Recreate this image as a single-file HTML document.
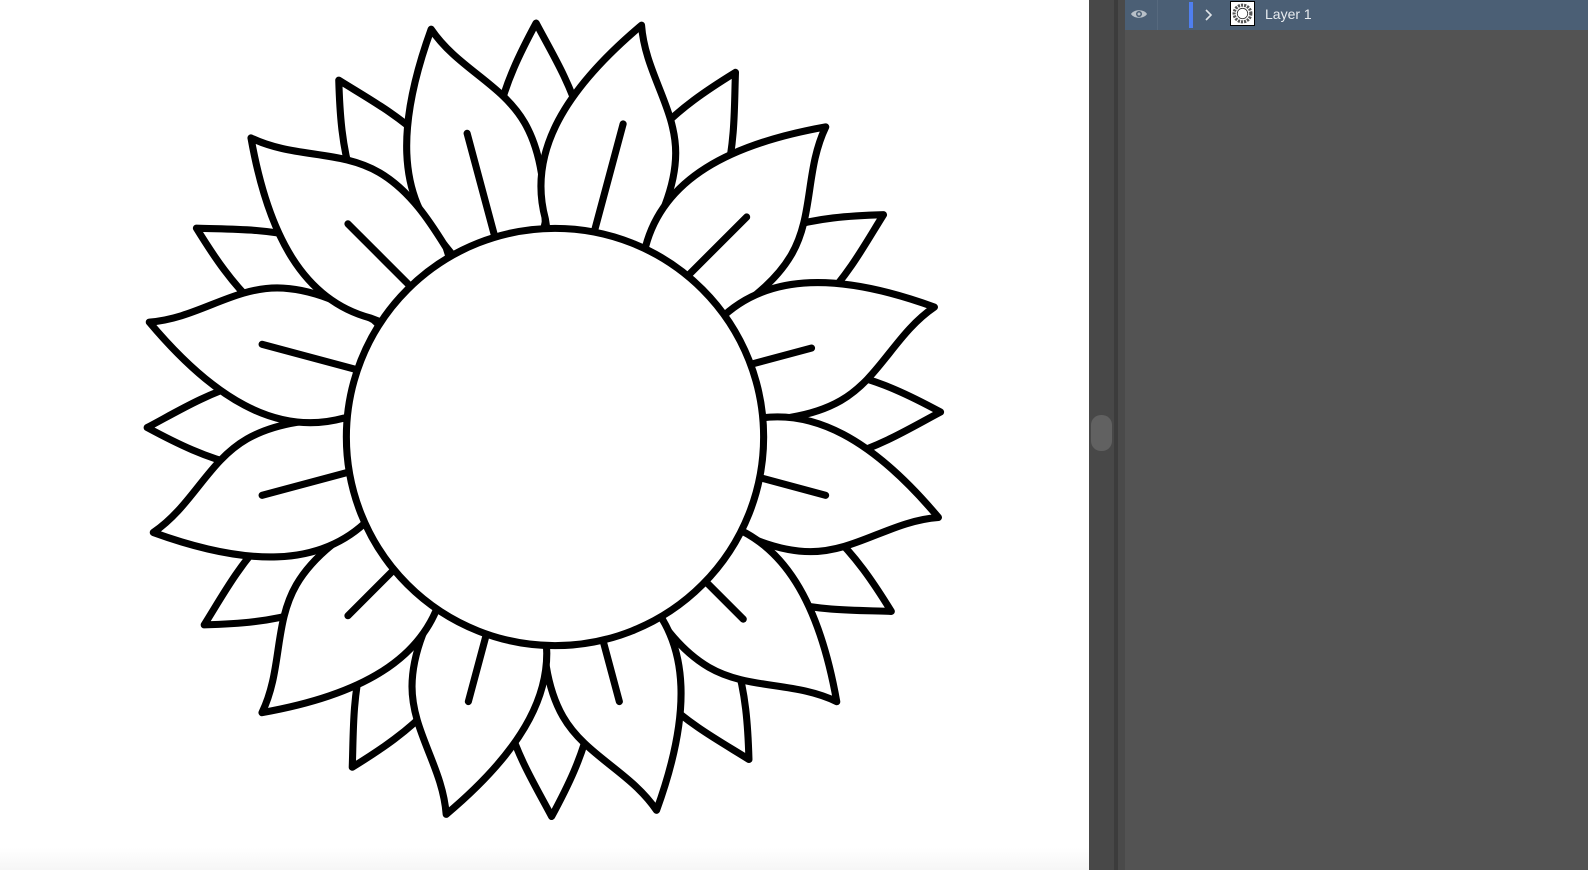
<!DOCTYPE html>
<html><head><style>
html,body{margin:0;padding:0;width:1588px;height:870px;overflow:hidden;background:#fff;font-family:"Liberation Sans",sans-serif}
.canvas{position:absolute;left:0;top:0;width:1089px;height:870px;background:linear-gradient(#fff 848px,#f6f6f6 870px)}
.p1{position:absolute;left:1089px;top:0;width:25px;height:870px;background:#484848}
.div{position:absolute;left:1114px;top:0;width:4px;height:870px;background:#3c3c3c}
.p2{position:absolute;left:1118px;top:0;width:7px;height:870px;background:#4a4a4a}
.p3{position:absolute;left:1125px;top:0;width:463px;height:870px;background:#535353}
.row{position:absolute;left:1125px;top:0;width:463px;height:30px;background:#4b5f75}
.thumb{position:absolute;left:1091px;top:415px;width:21px;height:36px;border-radius:10px;background:#616161}
</style></head><body>
<div class="canvas">
<svg width="1089" height="870" viewBox="0 0 1089 870">
<defs>
<path id="bp" d="M -30,-150 L -45,-200 C -65,-290 -42,-345 -8,-408 C 20,-355 58,-300 45,-200 L 30,-150 Z"/>
<path id="fp" d="M -30,-150 L -52,-200 C -88,-262 -66,-335 -8,-418 C 8,-372 48,-345 60,-300 C 70,-262 60,-222 54,-196 L 30,-150 Z"/>
</defs>
<g transform="translate(555,437) scale(1.0128)" fill="#fff" stroke="#000" stroke-width="7" stroke-linejoin="round" stroke-linecap="round">
<g transform="translate(-11,-17) scale(0.96)" stroke-width="7.3">
<use href="#bp" transform="rotate(0)"/><use href="#bp" transform="rotate(30)"/><use href="#bp" transform="rotate(60)"/><use href="#bp" transform="rotate(90)"/><use href="#bp" transform="rotate(120)"/><use href="#bp" transform="rotate(150)"/><use href="#bp" transform="rotate(180)"/><use href="#bp" transform="rotate(210)"/><use href="#bp" transform="rotate(240)"/><use href="#bp" transform="rotate(270)"/><use href="#bp" transform="rotate(300)"/><use href="#bp" transform="rotate(330)"/>
</g>
<g transform="translate(-11,-17) scale(0.96)" stroke-width="7.3">
<g transform="rotate(-15)"><use href="#fp"/><line x1="0" y1="-170" x2="0" y2="-305"/></g>
<g transform="rotate(15)"><use href="#fp"/><line x1="0" y1="-170" x2="0" y2="-315"/></g>
<g transform="rotate(45)"><use href="#fp"/><line x1="0" y1="-170" x2="0" y2="-295"/></g>
<g transform="rotate(75)"><use href="#fp"/><line x1="0" y1="-170" x2="0" y2="-285"/></g>
<g transform="rotate(105)"><use href="#fp"/><line x1="0" y1="-170" x2="0" y2="-300"/></g>
<g transform="rotate(135)"><use href="#fp"/><line x1="0" y1="-170" x2="0" y2="-290"/></g>
<g transform="rotate(165)"><use href="#fp"/><line x1="0" y1="-170" x2="0" y2="-300"/></g>
<g transform="rotate(195)"><use href="#fp"/><line x1="0" y1="-170" x2="0" y2="-300"/></g>
<g transform="rotate(225)"><use href="#fp"/><line x1="0" y1="-170" x2="0" y2="-285"/></g>
<g transform="rotate(255)"><use href="#fp"/><line x1="0" y1="-170" x2="0" y2="-300"/></g>
<g transform="rotate(285)"><use href="#fp"/><line x1="0" y1="-170" x2="0" y2="-300"/></g>
<g transform="rotate(315)"><use href="#fp"/><line x1="0" y1="-170" x2="0" y2="-285"/></g>
</g>
<circle cx="0" cy="0" r="206"/>
</g>
</svg>
</div>
<div class="p1"></div><div class="div"></div><div class="p2"></div><div class="p3"></div>
<div class="thumb"></div>
<div class="row">
<svg style="position:absolute;left:5px;top:7px" width="18" height="14" viewBox="0 0 18 14"><path d="M1,7 C4,2 14,2 17,7 C14,12 4,12 1,7 Z" fill="#b8c0c8"/><circle cx="9" cy="7" r="3" fill="#4b5f75"/><circle cx="9" cy="7" r="1.5" fill="#b8c0c8"/></svg>
<div style="position:absolute;left:32px;top:0;width:1px;height:30px;background:#56697e"></div>
<div style="position:absolute;left:64px;top:2px;width:4px;height:26px;background:#4f7ff0"></div>
<svg style="position:absolute;left:78px;top:8px" width="10" height="14" viewBox="0 0 10 14"><path d="M3,2 L8,7 L3,12" fill="none" stroke="#e0e4e8" stroke-width="1.6"/></svg>
<div style="position:absolute;left:105px;top:1px;width:25px;height:25px;border:1px solid #000;background:#fff;box-sizing:border-box">
<svg width="23" height="23" viewBox="0 0 22 22"><circle cx="11" cy="11" r="8" fill="none" stroke="#555" stroke-width="3" stroke-dasharray="2 1"/><circle cx="11" cy="11" r="5" fill="#fff" stroke="#333" stroke-width="0.8"/></svg></div>
<div style="position:absolute;left:140px;top:6px;color:#e8ecf0;font-size:14px">Layer 1</div>
</div>
</body></html>
